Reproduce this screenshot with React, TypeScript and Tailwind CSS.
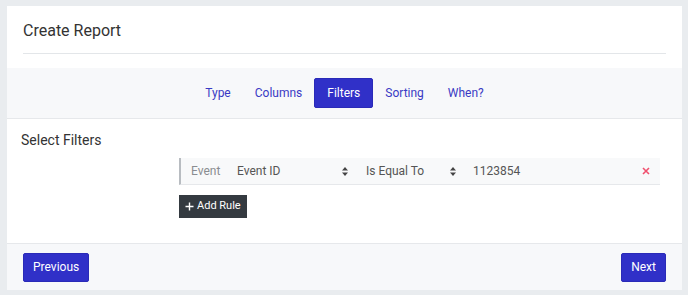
import React from 'react';

function SortArrows() {
  return (
    <svg width="6" height="9" viewBox="0 0 6 9" className="shrink-0">
      <path d="M3 0 L6 3.5 L0 3.5 Z" fill="#444" />
      <path d="M3 9 L6 5.5 L0 5.5 Z" fill="#444" />
    </svg>
  );
}

export default function App() {
  const tabs = ['Type', 'Columns', 'Filters', 'Sorting', 'When?'];
  const active = 'Filters';

  return (
    <div
      className="w-[688px] h-[295px] bg-[#e9ecef] pt-[6px] pl-[7px] pr-[6px] pb-[5px]"
      style={{ fontFamily: 'Roboto, "Noto Sans", sans-serif' }}
    >
      <div className="h-full bg-white flex flex-col">
        {/* header */}
        <div className="px-4 pt-[13px]">
          <h1 className="text-[16px] leading-6 text-[#333] pb-[10px] border-b border-[#e3e6e9]">Create Report</h1>
        </div>

        {/* steps */}
        <div className="mt-[14px] bg-[#f7f8fa] border-b border-[#e6e8eb] h-[51px] flex items-center justify-center">
          {tabs.map((t) =>
            t === active ? (
              <button
                key={t}
                className="h-[30px] px-[12px] bg-[#3030c8] text-white text-[12px] rounded-[2px] border border-[#2a2ab8]"
              >
                {t}
              </button>
            ) : (
              <button key={t} className="h-[30px] px-[12px] text-[#3a3ac4] text-[12px]">
                {t}
              </button>
            )
          )}
        </div>

        {/* filters */}
        <div className="flex-1 pl-[14px] pr-[22px] pt-[11px]">
          <h2 className="text-[14px] leading-5 text-[#333]">Select Filters</h2>
          <div className="ml-[158px] mt-[8px]">
            <div className="h-[27px] flex items-center bg-[#f8f9fa] border-l-2 border-[#b8bcc1] border-b border-b-[#e6e8eb] pl-[10px] pr-[8px] text-[12px]">
              <span className="w-[46px] text-[#8a8d91]">Event</span>
              <div className="w-[129px] flex items-center pr-[18px] text-[#555]">
                <span className="flex-1">Event ID</span>
                <SortArrows />
              </div>
              <div className="w-[107px] flex items-center pr-[17px] text-[#555]">
                <span className="flex-1">Is Equal To</span>
                <SortArrows />
              </div>
              <span className="flex-1 text-[#555]">1123854</span>
              <svg width="8" height="8" viewBox="0 0 8 8" className="mr-[2px]">
                <path d="M1 1 L7 7 M7 1 L1 7" stroke="#f0506e" strokeWidth="1.6" />
              </svg>
            </div>
            <button className="mt-[10px] h-[23px] px-[6px] bg-[#343a40] text-white text-[11px] flex items-center gap-[3px]">
              <svg width="9" height="9" viewBox="0 0 9 9">
                <path d="M4.5 0.5 V8.5 M0.5 4.5 H8.5" stroke="#fff" strokeWidth="1.4" />
              </svg>
              Add Rule
            </button>
          </div>
        </div>

        {/* footer */}
        <div className="h-[47px] bg-[#f7f8fa] border-t border-[#e6e8eb] flex items-center justify-between px-4">
          <button className="h-[29px] px-[9px] bg-[#3030c8] text-white text-[12px] rounded-[2px] border border-[#2a2ab8]">
            Previous
          </button>
          <button className="h-[29px] px-[9px] bg-[#3030c8] text-white text-[12px] rounded-[2px] border border-[#2a2ab8]">
            Next
          </button>
        </div>
      </div>
    </div>
  );
}
